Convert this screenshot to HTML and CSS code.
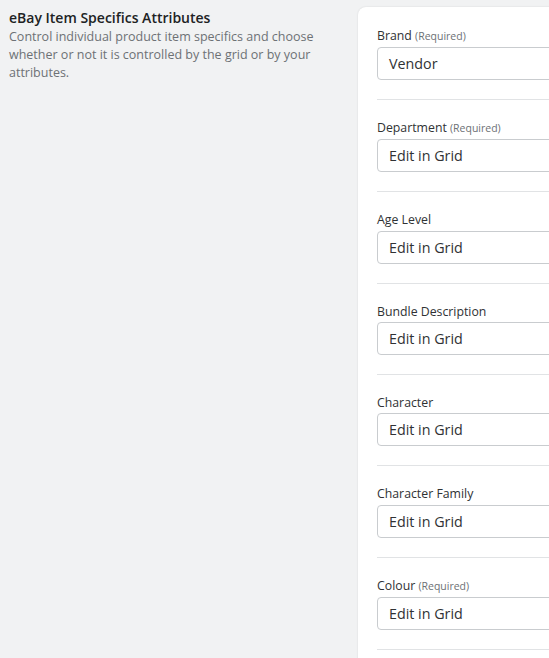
FILE: index.html
```html
<!DOCTYPE html>
<html>
<head>
<meta charset="utf-8">
<link rel="stylesheet" href="styles.css">
</head>
<body>
<div class="layout">
  <div class="intro">
    <h2 class="title">eBay Item Specifics Attributes</h2>
    <p class="desc">Control individual product item specifics and choose whether or not it is controlled by the grid or by your attributes.</p>
  </div>
  <div class="card">
    <div class="field">
      <div class="label">Brand <span class="req">(Required)</span></div>
      <div class="input">Vendor</div>
    </div>
    <div class="field">
      <div class="label">Department <span class="req">(Required)</span></div>
      <div class="input">Edit in Grid</div>
    </div>
    <div class="field">
      <div class="label">Age Level</div>
      <div class="input">Edit in Grid</div>
    </div>
    <div class="field">
      <div class="label">Bundle Description</div>
      <div class="input">Edit in Grid</div>
    </div>
    <div class="field">
      <div class="label">Character</div>
      <div class="input">Edit in Grid</div>
    </div>
    <div class="field">
      <div class="label">Character Family</div>
      <div class="input">Edit in Grid</div>
    </div>
    <div class="field">
      <div class="label">Colour <span class="req">(Required)</span></div>
      <div class="input">Edit in Grid</div>
    </div>
  </div>
</div>
</body>
</html>
```
FILE: styles.css
```css
html, body {
  margin: 0;
  padding: 0;
  background: #f1f2f3;
  overflow: hidden;
  height: 658px;
}
body {
  font-family: "Open Sans", "Noto Sans", "Liberation Sans", sans-serif;
  color: #202223;
}
.layout {
  display: grid;
  grid-template-columns: 329px 260px;
  column-gap: 20px;
  padding: 7px 0 0 9px;
  width: 640px;
}
.intro {
  padding-top: 1px;
}
.title {
  margin: 0;
  font-size: 14px;
  font-weight: 600;
  line-height: 20px;
}
.desc {
  margin: 0;
  font-size: 12.5px;
  line-height: 18px;
  color: #6d7175;
}
.card {
  background: #ffffff;
  border-radius: 8px 0 0 0;
  box-shadow: 0 0 2px rgba(0,0,0,0.12);
  padding: 0 0 0 19px;
  min-height: 700px;
}
.field {
  padding: 20.7px 0 19px 0;
  border-bottom: 1px solid #e1e3e5;
}
.field + .field {
  padding-top: 20px;
}
.label {
  font-size: 12.3px;
  line-height: 15.33px;
  margin-bottom: 3px;
  color: #303234;
}
.req {
  font-size: 10.5px;
  color: #6d7175;
}
.input {
  box-sizing: border-box;
  height: 33px;
  border: 1px solid #c9cccf;
  border-radius: 4px;
  padding: 0 11px;
  font-size: 14.3px;
  line-height: 31px;
  color: #303234;
}
```
